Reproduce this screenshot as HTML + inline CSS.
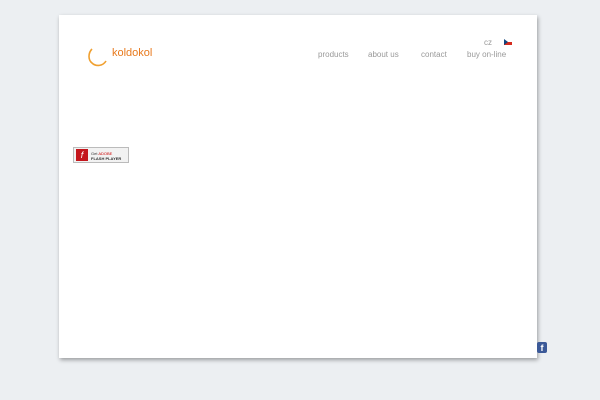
<!DOCTYPE html>
<html><head><style>
body{margin:0;width:600px;height:400px;background:#eceff2;position:relative;overflow:hidden;font-family:"Liberation Sans",sans-serif}
.page{position:absolute;left:59px;top:15px;width:478px;height:343px;background:#fff;box-shadow:1px 2px 4px rgba(0,0,0,.35)}
.nav{position:absolute;top:50px;font-size:8px;color:#999}
</style></head><body>
<div class="page"></div>
<svg style="position:absolute;left:87px;top:46px" width="24" height="24"><path d="M5 3 C1 7 1 14 5 17 C9 21 16 20 19 15" fill="none" stroke="#f0a030" stroke-width="1.6"/></svg>
<div style="position:absolute;left:112px;top:47px;font-size:11px;color:#e87a1e">koldokol</div>
<div class="nav" style="left:318px">products</div>
<div class="nav" style="left:368px">about us</div>
<div class="nav" style="left:421px">contact</div>
<div class="nav" style="left:467px">buy on-line</div>
<div class="nav" style="left:484px;top:38px">cz</div>
<div style="position:absolute;left:504px;top:39px;width:8px;height:6px;background:linear-gradient(#fff 50%,#d52b1e 50%)"><div style="width:0;height:0;border-top:3px solid transparent;border-bottom:3px solid transparent;border-left:4px solid #11457e"></div></div>
<div style="position:absolute;left:73px;top:147px;width:56px;height:16px;background:#f2f2f2;border:1px solid #bbb;box-sizing:border-box">
<div style="position:absolute;left:2px;top:1px;width:12px;height:12px;background:#c4161c;color:#fff;font-size:9px;font-style:italic;text-align:center;line-height:12px">f</div>
<div style="position:absolute;left:17px;top:3px;font-size:4px;color:#333;line-height:5px">Get <span style="color:#c00">ADOBE</span><br><b>FLASH PLAYER</b></div></div>
<div style="position:absolute;left:537px;top:342px;width:10px;height:11px;background:#3b5998;color:#fff;font-size:9px;font-weight:bold;text-align:center;line-height:13px;border-radius:2px;overflow:hidden">f</div>
</body></html>
